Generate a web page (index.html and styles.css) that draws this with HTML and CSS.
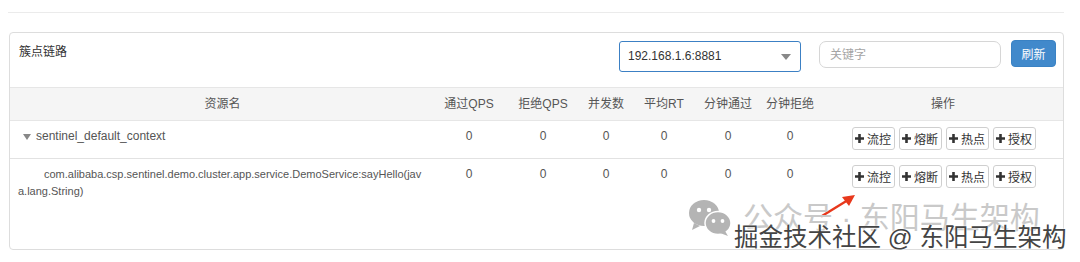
FILE: index.html
```html
<!DOCTYPE html>
<html lang="zh-CN">

<head>
    <meta charset="UTF-8">
    <title>簇点链路</title>
    <link rel="stylesheet" href="styles.css">
</head>

<body>
    <div class="page">
        <div class="top-line"></div>

        <div class="panel">
            <div class="panel-heading">
                <span class="panel-title">簇点链路</span>
                <div class="tools">
                    <div class="machine-select">
                        <span>192.168.1.6:8881</span>
                        <svg class="caret" width="10" height="6" viewBox="0 0 10 6"><path d="M0 0h10L5 6z" fill="#888"/></svg>
                    </div>
                    <input class="keyword" type="text" placeholder="关键字">
                    <button class="btn-refresh">刷新</button>
                </div>
            </div>

            <table class="tree-table">
                <colgroup>
                    <col class="c-name">
                    <col class="c-pass">
                    <col class="c-block">
                    <col class="c-thread">
                    <col class="c-rt">
                    <col class="c-min-pass">
                    <col class="c-min-block">
                    <col class="c-ops">
                </colgroup>
                <thead>
                    <tr>
                        <th>资源名</th>
                        <th>通过QPS</th>
                        <th>拒绝QPS</th>
                        <th>并发数</th>
                        <th>平均RT</th>
                        <th>分钟通过</th>
                        <th>分钟拒绝</th>
                        <th>操作</th>
                    </tr>
                </thead>
                <tbody>
                    <tr>
                        <td class="name">
                            <svg class="fold" width="8" height="6" viewBox="0 0 8 6"><path d="M0 0h8L4 6z" fill="#888"/></svg>sentinel_default_context
                        </td>
                        <td>0</td>
                        <td>0</td>
                        <td>0</td>
                        <td>0</td>
                        <td>0</td>
                        <td>0</td>
                        <td class="ops">
                            <div class="btn-group">
                                <button class="btn-xs"><svg width="9" height="9" viewBox="0 0 9 9"><path d="M3.2 0h2.6v3.2H9v2.6H5.8V9H3.2V5.8H0V3.2h3.2z" fill="#333"/></svg>流控</button>
                                <button class="btn-xs"><svg width="9" height="9" viewBox="0 0 9 9"><path d="M3.2 0h2.6v3.2H9v2.6H5.8V9H3.2V5.8H0V3.2h3.2z" fill="#333"/></svg>熔断</button>
                                <button class="btn-xs"><svg width="9" height="9" viewBox="0 0 9 9"><path d="M3.2 0h2.6v3.2H9v2.6H5.8V9H3.2V5.8H0V3.2h3.2z" fill="#333"/></svg>热点</button>
                                <button class="btn-xs"><svg width="9" height="9" viewBox="0 0 9 9"><path d="M3.2 0h2.6v3.2H9v2.6H5.8V9H3.2V5.8H0V3.2h3.2z" fill="#333"/></svg>授权</button>
                            </div>
                        </td>
                    </tr>
                    <tr class="leaf">
                        <td class="name"><span class="leaf-name">com.alibaba.csp.sentinel.demo.cluster.app.service.DemoService:sayHello(java.lang.String)</span></td>
                        <td>0</td>
                        <td>0</td>
                        <td>0</td>
                        <td>0</td>
                        <td>0</td>
                        <td>0</td>
                        <td class="ops">
                            <div class="btn-group">
                                <button class="btn-xs"><svg width="9" height="9" viewBox="0 0 9 9"><path d="M3.2 0h2.6v3.2H9v2.6H5.8V9H3.2V5.8H0V3.2h3.2z" fill="#333"/></svg>流控</button>
                                <button class="btn-xs"><svg width="9" height="9" viewBox="0 0 9 9"><path d="M3.2 0h2.6v3.2H9v2.6H5.8V9H3.2V5.8H0V3.2h3.2z" fill="#333"/></svg>熔断</button>
                                <button class="btn-xs"><svg width="9" height="9" viewBox="0 0 9 9"><path d="M3.2 0h2.6v3.2H9v2.6H5.8V9H3.2V5.8H0V3.2h3.2z" fill="#333"/></svg>热点</button>
                                <button class="btn-xs"><svg width="9" height="9" viewBox="0 0 9 9"><path d="M3.2 0h2.6v3.2H9v2.6H5.8V9H3.2V5.8H0V3.2h3.2z" fill="#333"/></svg>授权</button>
                            </div>
                        </td>
                    </tr>
                </tbody>
            </table>
        </div>

        <!-- 文章截图上的水印 -->
        <svg class="arrow" width="40" height="28" viewBox="0 0 40 28">
            <path d="M2 25L28 9" stroke="#e8381c" stroke-width="2.4" stroke-linecap="round"/>
            <path d="M35 4L22 6l7 9z" fill="#e8381c"/>
        </svg>
        <div class="wm-official">
            <svg class="wechat" width="42" height="37" viewBox="0 0 42 37">
                <ellipse cx="15" cy="14" rx="15" ry="13" fill="#b4b4b4"/>
                <path d="M5 24l-2 7 8-4z" fill="#b4b4b4"/>
                <circle cx="10" cy="11" r="2.2" fill="#fff"/>
                <circle cx="20" cy="11" r="2.2" fill="#fff"/>
                <ellipse cx="29" cy="24" rx="13" ry="11.5" fill="#b4b4b4" stroke="#fff" stroke-width="1.5"/>
                <path d="M36 32l3 5-8-3z" fill="#b4b4b4"/>
                <circle cx="24.5" cy="22" r="1.9" fill="#fff"/>
                <circle cx="33.5" cy="22" r="1.9" fill="#fff"/>
            </svg>
            <span>公众号 · 东阳马生架构</span>
        </div>
        <div class="wm-juejin">掘金技术社区 @ 东阳马生架构</div>
    </div>
</body>

</html>
```

FILE: styles.css
```css
* {
    padding: 0px;
    margin: 0px;
    box-sizing: border-box;
}

body {
    background: #ffffff;
    font-family: "Liberation Sans", "Noto Sans CJK SC", sans-serif;
    font-size: 12px;
    line-height: 17px;
    color: #555555;
}

.page {
    position: relative;
    width: 1080px;
    height: 262px;
    padding: 12px 16px 0px 8px;
    overflow: hidden;
}

.top-line {
    height: 1px;
    background: #ebebeb;
}

/* 面板 */
.panel {
    margin: 19px 0px 0px 1px;
    height: 218px;
    border: #dddddd solid 1px;
    border-radius: 4px;
    overflow: hidden;
}

.panel-heading {
    display: flex;
    justify-content: space-between;
    align-items: flex-start;
    height: 54px;
    padding: 8px 7px 0px 9px;
}

.panel-title {
    margin-top: 3px;
    color: #333333;
    font-size: 12px;
}

.tools {
    display: flex;
    align-items: flex-start;
}

.machine-select {
    display: flex;
    justify-content: space-between;
    align-items: center;
    width: 182px;
    height: 31px;
    padding: 0px 9px 0px 8px;
    border: #3c80c4 solid 1px;
    border-radius: 3px;
    color: #333333;
    font-size: 12px;
}

.keyword {
    width: 182px;
    height: 27px;
    margin-left: 18px;
    padding: 0px 10px;
    border: #d6d6d6 solid 1px;
    border-radius: 7px;
    font-family: inherit;
    font-size: 12px;
    color: #333333;
    outline: none;
}

.keyword::placeholder {
    color: #a5a5a5;
}

.btn-refresh {
    width: 45px;
    height: 27px;
    margin-left: 10px;
    margin-top: -1px;
    border: #3a82c4 solid 1px;
    border-radius: 4px;
    background: #4189cb;
    color: #ffffff;
    font-family: inherit;
    font-size: 12px;
}

/* 表格 */
.tree-table {
    width: 100%;
    border-collapse: collapse;
    table-layout: fixed;
}

.c-name { width: 425px; }
.c-pass { width: 68px; }
.c-block { width: 80px; }
.c-thread { width: 46px; }
.c-rt { width: 70px; }
.c-min-pass { width: 58px; }
.c-min-block { width: 66px; }
.c-ops { width: 240px; }

.tree-table th {
    height: 33px;
    background: #f5f5f5;
    border-top: #e6e6e6 solid 1px;
    border-bottom: #e6e6e6 solid 1px;
    font-weight: normal;
    color: #555555;
    text-align: center;
    white-space: nowrap;
}

.tree-table td {
    padding: 7px 8px 8px 8px;
    text-align: center;
    vertical-align: top;
    color: #555555;
}

.tree-table tbody tr:first-child td {
    border-bottom: #e2e2e2 solid 1px;
}

.tree-table td.name {
    text-align: left;
    padding-right: 10px;
    word-break: break-all;
}

.fold {
    margin: 0px 5px 0px 5px;
}

.leaf-name {
    display: block;
    text-indent: 26px;
    font-size: 11px;
    line-height: 17px;
}

.tree-table td.ops {
    padding-top: 6px;
    padding-bottom: 8px;
}

.btn-group {
    display: flex;
    justify-content: center;
    gap: 4px;
    padding-left: 1px;
}

.btn-xs {
    display: flex;
    align-items: center;
    justify-content: center;
    gap: 3px;
    width: 43px;
    height: 23px;
    border: #cfcfcf solid 1px;
    border-radius: 3px;
    background: #ffffff;
    font-family: inherit;
    font-size: 12px;
    color: #333333;
}

/* 水印 */
.arrow {
    position: absolute;
    left: 820px;
    top: 191px;
}

.wm-official {
    position: absolute;
    left: 689px;
    top: 199px;
    display: flex;
    align-items: center;
    gap: 12px;
    color: #c9c9c9;
    font-size: 30px;
    line-height: 36px;
}

.wm-juejin {
    position: absolute;
    left: 734px;
    top: 223px;
    font-size: 24.5px;
    line-height: 30px;
    color: #444444;
    text-shadow: 0px 0px 2px #ffffff, 0px 0px 2px #ffffff;
    white-space: nowrap;
}
```
